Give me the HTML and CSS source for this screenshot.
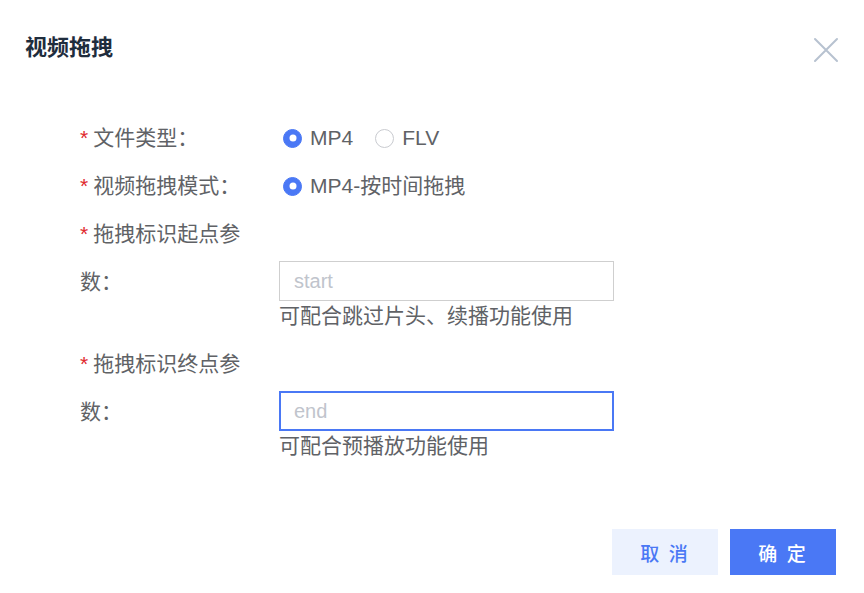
FILE: index.html
```html
<!DOCTYPE html>
<html lang="zh-CN">
<head>
    <meta charset="UTF-8">
    <meta name="viewport" content="width=device-width, initial-scale=1.0">
    <title>视频拖拽</title>
    <link rel="stylesheet" href="styles.css">
</head>
<body>
    <div class="dialog">
        <header class="dialog-header">
            <h2 class="dialog-title">视频拖拽</h2>
            <span class="dialog-close">
                <svg width="26" height="26" viewBox="0 0 26 26">
                    <path d="M2 2 L24 24 M24 2 L2 24" stroke="#b7c2d0" stroke-width="2" fill="none" stroke-linecap="round"/>
                </svg>
            </span>
        </header>
        <main class="dialog-body">
            <div class="form-item">
                <label class="form-label required">文件类型：</label>
                <div class="form-content">
                    <span class="radio checked"><span class="radio-dot"></span>MP4</span>
                    <span class="radio"><span class="radio-dot"></span>FLV</span>
                </div>
            </div>
            <div class="form-item">
                <label class="form-label required">视频拖拽模式：</label>
                <div class="form-content">
                    <span class="radio checked"><span class="radio-dot"></span>MP4-按时间拖拽</span>
                </div>
            </div>
            <div class="form-item tall">
                <label class="form-label required">拖拽标识起点参数：</label>
                <div class="form-content stacked">
                    <input type="text" class="input" placeholder="start">
                    <div class="hint">可配合跳过片头、续播功能使用</div>
                </div>
            </div>
            <div class="form-item tall">
                <label class="form-label required">拖拽标识终点参数：</label>
                <div class="form-content stacked">
                    <input type="text" class="input focused" placeholder="end">
                    <div class="hint">可配合预播放功能使用</div>
                </div>
            </div>
        </main>
        <footer class="dialog-footer">
            <button class="btn btn-plain">取 消</button>
            <button class="btn btn-primary">确 定</button>
        </footer>
    </div>
</body>
</html>
```

FILE: styles.css
```css
/* 弹窗 */
body {
    margin: 0;
    padding: 0;
    background-color: #fff;
    font-family: "Liberation Sans", "Noto Sans CJK SC", sans-serif;
    color: #606266;
}

.dialog {
    height: 100vh;
    display: flex;
    flex-direction: column;
    box-sizing: border-box;
}

.dialog-header {
    display: flex;
    justify-content: space-between;
    align-items: center;
    padding: 24px 25px 0 25px;
    height: 48px;
}

.dialog-title {
    margin: 0;
    font-size: 22px;
    line-height: 48px;
    font-weight: bold;
    color: #1f2d3d;
}

.dialog-close {
    display: flex;
    margin-top: 4px;
}

.dialog-body {
    padding: 42px 0 0 80px;
}

/* 表单 */
.form-item {
    display: flex;
    font-size: 21px;
    line-height: 48px;
}

.form-item.tall {
    margin-bottom: 9px;
}

.form-label {
    width: 180px;
    padding-right: 19px;
    flex-shrink: 0;
}

.form-label.required::before {
    content: "*";
    color: #e0282e;
    margin-right: 5px;
}

.form-content {
    display: flex;
    align-items: center;
}

.form-content.stacked {
    flex-direction: column;
    align-items: flex-start;
    padding-top: 51px;
}

.radio {
    display: flex;
    align-items: center;
    margin-left: 4px;
    margin-right: 18px;
    color: #606266;
}

.radio-dot {
    width: 19px;
    height: 19px;
    box-sizing: border-box;
    border: 1px solid #c9cbd0;
    border-radius: 50%;
    margin-right: 8px;
    background-color: #fff;
    position: relative;
}

.radio.checked .radio-dot {
    border-color: #4a78f5;
    background-color: #4a78f5;
}

.radio.checked .radio-dot::after {
    content: "";
    position: absolute;
    width: 7px;
    height: 7px;
    border-radius: 50%;
    background-color: #fff;
    left: 50%;
    top: 50%;
    transform: translate(-50%, -50%);
}

.input {
    width: 335px;
    height: 40px;
    box-sizing: border-box;
    border: 1px solid #cfcfcf;
    padding: 0 14px;
    font-size: 20px;
    font-family: "Liberation Sans", "Noto Sans CJK SC", sans-serif;
    color: #606266;
    outline: none;
    margin: 0;
}

.input::placeholder {
    color: #c0c4cc;
}

.input.focused {
    border: 2px solid #4a78f5;
    padding-left: 13px;
}

.hint {
    line-height: 30px;
    color: #606266;
}

/* 底部按钮 */
.dialog-footer {
    margin-top: auto;
    display: flex;
    justify-content: flex-end;
    gap: 12px;
    padding: 0 28px 18px 0;
}

.btn {
    width: 106px;
    height: 46px;
    border: none;
    font-size: 19px;
    font-weight: 500;
    font-family: "Liberation Sans", "Noto Sans CJK SC", sans-serif;
    letter-spacing: 2px;
    cursor: pointer;
}

.btn-plain {
    background-color: #ecf2fe;
    color: #4a78f5;
}

.btn-primary {
    background-color: #4a78f5;
    color: #fff;
}
```
